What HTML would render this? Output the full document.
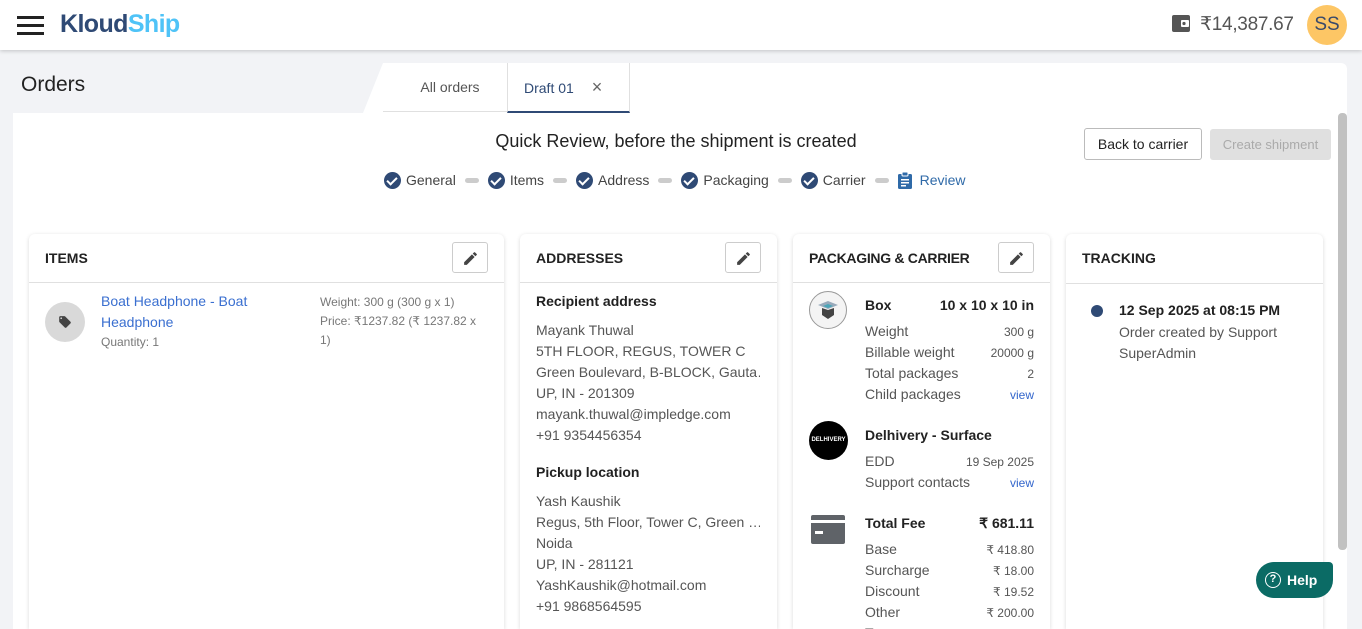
<!DOCTYPE html>
<html><head><meta charset="utf-8"><style>
*{box-sizing:border-box;margin:0;padding:0}
html,body{width:1362px;height:629px;overflow:hidden}
body{background:#f2f3f6;font-family:"Liberation Sans",Arial,sans-serif;color:#212121;position:relative}
.hdr{position:absolute;left:0;top:0;width:1362px;height:50px;background:#fff;box-shadow:0 1px 4px rgba(0,0,0,.2);z-index:5}
.abs{position:absolute}
.card{position:absolute;top:234px;height:395px;background:#fff;border-radius:6px 6px 0 0;box-shadow:0 1px 4px rgba(0,0,0,.15)}
.card .h{height:49px;border-bottom:1px solid #e0e0e0;padding:16px 16px;font-size:14px;font-weight:bold;color:#222}
.ed{position:absolute;top:8px;right:16px;width:36px;height:31px;border:1px solid #ccc;border-radius:3px;background:#fff}
.ed svg{position:absolute;left:9px;top:7px}
.t{position:absolute;font-size:14px;color:#555;white-space:nowrap}
.r{position:absolute;font-size:12px;color:#555;text-align:right;white-space:nowrap}
.step{display:inline-flex;align-items:center;font-size:14px;color:#444;vertical-align:middle}
.ck{width:17px;height:17px;border-radius:50%;background:#2f4a75;display:inline-block;margin-right:5px;position:relative}
.ck:after{content:"";position:absolute;left:5px;top:3px;width:4px;height:8px;border:solid #fff;border-width:0 2px 2px 0;transform:rotate(45deg)}
.dash{display:inline-block;width:14px;height:5px;border-radius:3px;background:#ccc;margin:0 9px;vertical-align:middle}
a{color:#3366cc}
</style></head><body>
<div class="hdr">
 <div class="abs" style="left:17px;top:16px;width:27px;height:3px;background:#222;box-shadow:0 8px 0 #222,0 16px 0 #222"></div>
 <div class="abs" style="left:60px;top:10px;font-size:25px;font-weight:bold;color:#2f4a75;letter-spacing:-.6px">Kloud<span style="color:#4fc3f7">Ship</span></div>
 <svg class="abs" style="left:1172px;top:14px" width="19" height="19" viewBox="0 0 19 19"><rect x="0" y="1" width="18" height="17" rx="2" fill="#555"/><rect x="9" y="6" width="8" height="7" rx="1" fill="#fff"/><circle cx="12" cy="9.5" r="1.6" fill="#555"/></svg>
 <div class="abs" style="left:1200px;top:13px;font-size:19px;color:#555;letter-spacing:-.3px">₹14,387.67</div>
 <div class="abs" style="left:1307px;top:5px;width:40px;height:40px;border-radius:50%;background:#fdc665;color:#3a4a6a;font-size:19px;text-align:center;line-height:40px">SS</div>
</div>
<div class="abs" style="left:21px;top:73px;font-size:21px;color:#222">Orders</div>
<svg class="abs" style="left:363px;top:63px" width="20" height="50"><polygon points="20,0 20,50 0,50" fill="#fff"/></svg>
<div class="abs" style="left:383px;top:63px;width:964px;height:50px;background:#fff;border-radius:0 6px 0 0"></div>
<div class="abs" style="left:383px;top:63px;width:124px;height:49px;border-bottom:1px solid #e0e0e0;font-size:14px;color:#555;text-align:center;line-height:48px;padding-left:10px">All orders</div>
<div class="abs" style="left:507px;top:63px;width:123px;height:50px;border-left:1px solid #e0e0e0;border-right:1px solid #e0e0e0;border-bottom:2px solid #2f4a75;font-size:14px;color:#2f4a75;line-height:48px;padding-left:16px">Draft 01 <span style="color:#666;font-size:18px;margin-left:14px">×</span></div>
<div class="abs" style="left:13px;top:113px;width:1334px;height:520px;background:#fff"></div>
<div class="abs" style="left:1338px;top:113px;width:9px;height:437px;background:#c1c1c1;border-radius:4px"></div>
<div class="abs" style="left:0;width:1352px;top:131px;text-align:center;font-size:18px;color:#222">Quick Review, before the shipment is created</div>
<div class="abs" style="left:384px;top:171px;white-space:nowrap;height:18px;display:flex;align-items:center">
<span class="step"><i class="ck"></i>General</span><span class="dash"></span><span class="step"><i class="ck"></i>Items</span><span class="dash"></span><span class="step"><i class="ck"></i>Address</span><span class="dash"></span><span class="step"><i class="ck"></i>Packaging</span><span class="dash"></span><span class="step"><i class="ck"></i>Carrier</span><span class="dash"></span><span class="step" style="color:#2f6aa8"><svg width="14" height="17" style="margin-right:8px" viewBox="0 0 14 17"><rect x="0" y="2" width="14" height="15" rx="1.5" fill="#2f6aa8"/><rect x="4" y="0" width="6" height="4" rx="1" fill="#2f6aa8" stroke="#fff"/><rect x="3" y="7" width="8" height="1.5" fill="#fff"/><rect x="3" y="10" width="8" height="1.5" fill="#fff"/><rect x="3" y="13" width="5" height="1.5" fill="#fff"/></svg>Review</span>
</div>
<div class="abs" style="left:1084px;top:128px;width:118px;height:32px;border:1px solid #bbb;border-radius:3px;font-size:14px;text-align:center;line-height:30px;color:#222">Back to carrier</div>
<div class="abs" style="left:1210px;top:129px;width:121px;height:31px;background:#e0e0e0;border-radius:3px;font-size:13px;text-align:center;line-height:31px;color:#aaa">Create shipment</div>

<div class="card" style="left:29px;width:475px"><div class="h">ITEMS</div><div class="ed"><svg width="17" height="17" viewBox="0 0 24 24"><path d="M3 17.25V21h3.750L17.8 9.94l-3.75-3.75L3 17.25zM20.7 7.04a1 1 0 000-1.41l-2.34-2.34a1 1 0 00-1.41 0l-1.83 1.83 3.75 3.75 1.83-1.830z" fill="#444"/></svg></div>
 <div class="abs" style="left:16px;top:68px;width:40px;height:40px;border-radius:50%;background:#d9d9d9"></div>
 <svg class="abs" style="left:29px;top:81px" width="14" height="14" viewBox="0 0 24 24"><path d="M21.4 11.6l-9-9C12 2.2 11.5 2 11 2H4c-1.1 0-2 .9-2 2v7c0 .55.22 1.05.59 1.42l9 9c.36.36.86.58 1.41.58s1.05-.22 1.41-.59l7-7c.37-.36.59-.86.59-1.41s-.23-1.06-.6-1.4zM5.5 7C4.67 7 4 6.33 4 5.5S4.67 4 5.5 4 7 4.67 7 5.5 6.33 7 5.5 7z" fill="#444"/></svg>
 <div class="abs" style="left:72px;top:57px;font-size:14px;line-height:21px;color:#3a6fd0">Boat Headphone - Boat<br>Headphone</div>
 <div class="abs" style="left:72px;top:101px;font-size:12px;color:#777">Quantity: 1</div>
 <div class="abs" style="left:291px;top:59px;font-size:12px;line-height:19px;color:#777;width:170px">Weight: 300 g (300 g x 1)<br>Price: ₹1237.82 (₹ 1237.82 x 1)</div>
</div>
<div class="card" style="left:520px;width:257px"><div class="h">ADDRESSES</div><div class="ed"><svg width="17" height="17" viewBox="0 0 24 24"><path d="M3 17.25V21h3.75L17.8 9.94l-3.75-3.75L3 17.25zM20.7 7.04a1 1 0 000-1.41l-2.34-2.34a1 1 0 00-1.41 0l-1.83 1.83 3.75 3.75 1.83-1.83z" fill="#444"/></svg></div>
 <div class="abs" style="left:16px;top:59px;font-size:14px;font-weight:bold">Recipient address</div>
 <div class="abs" style="left:16px;top:86px;font-size:14px;line-height:21px;color:#555;width:224px;white-space:nowrap;overflow:hidden">Mayank Thuwal<br>5TH FLOOR, REGUS, TOWER C<br>Green Boulevard, B-BLOCK, Gauta…<br>UP, IN - 201309<br>mayank.thuwal@impledge.com<br>+91 9354456354</div>
 <div class="abs" style="left:16px;top:230px;font-size:14px;font-weight:bold">Pickup location</div>
 <div class="abs" style="left:16px;top:257px;font-size:14px;line-height:21px;color:#555;width:224px;white-space:nowrap;overflow:hidden">Yash Kaushik<br>Regus, 5th Floor, Tower C, Green …<br>Noida<br>UP, IN - 281121<br>YashKaushik@hotmail.com<br>+91 9868564595</div>
</div>
<div class="card" style="left:793px;width:257px"><div class="h" style="letter-spacing:-.3px">PACKAGING &amp; CARRIER</div><div class="ed"><svg width="17" height="17" viewBox="0 0 24 24"><path d="M3 17.25V21h3.75L17.8 9.94l-3.75-3.75L3 17.25zM20.7 7.04a1 1 0 000-1.41l-2.34-2.34a1 1 0 00-1.41 0l-1.83 1.83 3.75 3.75 1.83-1.83z" fill="#444"/></svg></div>
 <div class="abs" style="left:16px;top:57px;width:38px;height:38px;border-radius:50%;border:1px solid #999;background:#f4f4f4"></div>
 <svg class="abs" style="left:24px;top:65px" width="22" height="22" viewBox="0 0 22 22"><polygon points="1,6 11,2 21,6 11,10" fill="#9ab"/><polygon points="6,7 11,5 16,7 11,9" fill="#4aa6b8"/><polygon points="5,9 11,11 17,9 17,16 11,20 5,16" fill="#444"/></svg>
 <div class="t" style="left:72px;top:63px;font-weight:bold;color:#222">Box</div>
 <div class="t" style="right:16px;top:63px;font-weight:bold;color:#222">10 x 10 x 10 in</div>
 <div class="t" style="left:72px;top:89px">Weight</div><div class="r" style="right:16px;top:91px">300 g</div>
 <div class="t" style="left:72px;top:110px">Billable weight</div><div class="r" style="right:16px;top:112px">20000 g</div>
 <div class="t" style="left:72px;top:131px">Total packages</div><div class="r" style="right:16px;top:133px">2</div>
 <div class="t" style="left:72px;top:152px">Child packages</div><div class="r" style="right:16px;top:154px"><a>view</a></div>
 <div class="abs" style="left:16px;top:187px;width:39px;height:39px;border-radius:50%;background:#000;color:#fff;font-size:6px;font-weight:bold;text-align:center;line-height:39px">DELHIVERY</div>
 <div class="t" style="left:72px;top:193px;font-weight:bold;color:#222">Delhivery - Surface</div>
 <div class="t" style="left:72px;top:219px">EDD</div><div class="r" style="right:16px;top:221px">19 Sep 2025</div>
 <div class="t" style="left:72px;top:240px">Support contacts</div><div class="r" style="right:16px;top:242px"><a>view</a></div>
 <svg class="abs" style="left:18px;top:281px" width="34" height="29" viewBox="0 0 34 29"><rect x="0" y="0" width="34" height="29" rx="2" fill="#5f6368"/><rect x="0" y="5" width="34" height="3" fill="#fff"/><rect x="4" y="16" width="8" height="3" fill="#fff"/></svg>
 <div class="t" style="left:72px;top:281px;font-weight:bold;color:#222">Total Fee</div><div class="t" style="right:16px;top:281px;font-weight:bold;color:#222">₹ 681.11</div>
 <div class="t" style="left:72px;top:307px">Base</div><div class="r" style="right:16px;top:309px">₹ 418.80</div>
 <div class="t" style="left:72px;top:328px">Surcharge</div><div class="r" style="right:16px;top:330px">₹ 18.00</div>
 <div class="t" style="left:72px;top:349px">Discount</div><div class="r" style="right:16px;top:351px">₹ 19.52</div>
 <div class="t" style="left:72px;top:370px">Other</div><div class="r" style="right:16px;top:372px">₹ 200.00</div>
 <div class="t" style="left:72px;top:391px">Tax</div>
</div>
<div class="card" style="left:1066px;width:257px"><div class="h" style="height:50px">TRACKING</div>
 <div class="abs" style="left:25px;top:71px;width:12px;height:12px;border-radius:50%;background:#2f4a75"></div>
 <div class="abs" style="left:53px;top:68px;font-size:14px;font-weight:bold">12 Sep 2025 at 08:15 PM</div>
 <div class="abs" style="left:53px;top:88px;font-size:14px;line-height:21px;color:#555">Order created by Support<br>SuperAdmin</div>
</div>
<div class="abs" style="left:1256px;top:562px;width:77px;height:36px;border-radius:18px 4px 18px 18px;background:#0b6b65;color:#fff;font-size:14px;font-weight:bold;display:flex;align-items:center;padding-left:9px"><span style="display:inline-block;width:16px;height:16px;border:1.5px solid #fff;border-radius:50%;font-size:11px;text-align:center;line-height:13px;margin-right:6px">?</span>Help</div>
</body></html>
